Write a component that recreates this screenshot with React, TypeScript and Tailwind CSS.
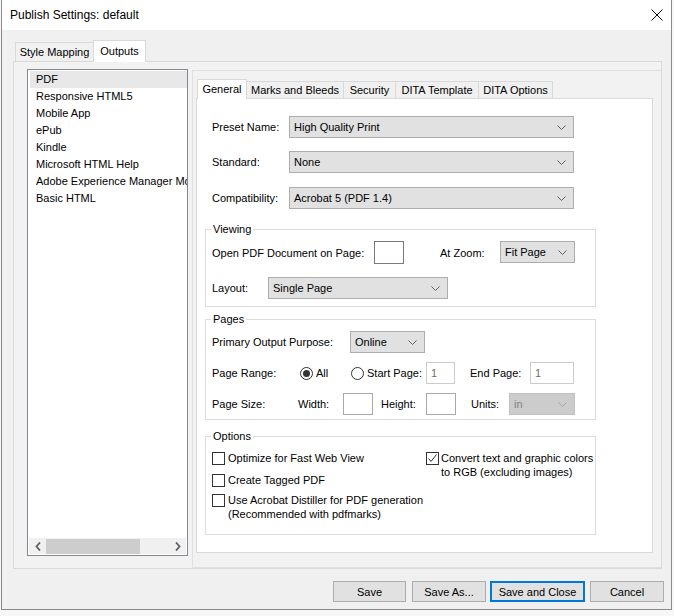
import React from 'react';

const Chevron = ({ color = '#606060' }: { color?: string }) => (
  <svg width="9" height="5" viewBox="0 0 9 5" fill="none">
    <path d="M0.5 0.5 L4.5 4.5 L8.5 0.5" stroke={color} strokeWidth="1" />
  </svg>
);

function Combo({ value, className, disabled }: { value: string; className: string; disabled?: boolean }) {
  return (
    <div
      className={`flex h-[22px] shrink-0 items-center justify-between border pl-[4px] pr-[7px] ${
        disabled ? 'border-[#bfbfbf] bg-[#cccccc] text-[#838383]' : 'border-[#adadad] bg-[#e1e1e1] text-black'
      } ${className}`}
    >
      <span>{value}</span>
      <Chevron color={disabled ? '#a8a8a8' : '#606060'} />
    </div>
  );
}

function TextBox({ value = '', className, tone = 'normal' }: { value?: string; className: string; tone?: 'normal' | 'light' | 'disabled' }) {
  const border =
    tone === 'normal' ? 'border-[#7a7a7a]' : tone === 'light' ? 'border-[#a9a9a9]' : 'border-[#cccccc]';
  return (
    <div className={`flex h-[22px] shrink-0 items-center border bg-white pl-[4px] text-[#6d6d6d] ${border} ${className}`}>
      {value}
    </div>
  );
}

function Group({ label, className, children }: { label: string; className: string; children: React.ReactNode }) {
  return (
    <div className={`relative ml-[8px] w-[391px] border border-[#dcdcdc] ${className}`}>
      <span className="absolute left-[5px] top-[-8px] bg-white px-[2px] leading-[14px]">{label}</span>
      {children}
    </div>
  );
}

function Radio({ checked }: { checked?: boolean }) {
  return (
    <span className="flex h-[13px] w-[13px] shrink-0 items-center justify-center rounded-full border border-[#333333] bg-white">
      {checked && <span className="h-[7px] w-[7px] rounded-full bg-[#333333]" />}
    </span>
  );
}

function Check({ checked }: { checked?: boolean }) {
  return (
    <span className="mt-[1px] flex h-[13px] w-[13px] shrink-0 items-center justify-center border border-[#333333] bg-white">
      {checked && (
        <svg width="11" height="11" viewBox="0 0 11 11" fill="none">
          <path d="M1.5 5.5 L4 8.5 L9.5 1.5" stroke="#333333" strokeWidth="1" />
        </svg>
      )}
    </span>
  );
}

const outputs = [
  'PDF',
  'Responsive HTML5',
  'Mobile App',
  'ePub',
  'Kindle',
  'Microsoft HTML Help',
  'Adobe Experience Manager Mobile',
  'Basic HTML',
];

const innerTabs = ['Marks and Bleeds', 'Security', 'DITA Template', 'DITA Options'];
const innerTabWidths = ['w-[97px]', 'w-[52px]', 'w-[83px]', 'w-[74px]'];

export default function App() {
  return (
    <div className="h-[616px] w-[674px] overflow-hidden bg-[#f7f7f7] pl-[1px] font-['Liberation_Sans',Arial,sans-serif] text-[11px] leading-[14px] text-black">
      <div className="flex h-[610px] w-[671px] flex-col border-x border-b border-[#8a8a8a] bg-[#f0f0f0]">
        {/* title bar */}
        <div className="flex h-[30px] shrink-0 items-center justify-between bg-white pl-[8px] pr-[8px]">
          <span className="text-[12px]">Publish Settings: default</span>
          <svg width="12" height="12" viewBox="0 0 12 12" fill="none">
            <path d="M0.5 0.5 L11.5 11.5 M11.5 0.5 L0.5 11.5" stroke="#111111" strokeWidth="1" />
          </svg>
        </div>

        <div className="flex flex-1 flex-col pt-[10px]">
          {/* outer tabs */}
          <div className="ml-[13px] flex h-[22px] items-start">
            <div className="mt-[2px] flex h-[20px] w-[78px] items-center justify-center border border-r-0 border-[#d9d9d9] bg-[#f0f0f0]">
              Style Mapping
            </div>
            <div className="relative z-10 flex h-[22px] w-[53px] items-start justify-center border border-b-0 border-[#d9d9d9] bg-white pt-[3px]">
              Outputs
            </div>
          </div>

          <div className="-mt-px ml-[11px] flex h-[508px] w-[649px] border border-[#d9d9d9] bg-[#f2f2f2] pl-[13px] pt-[7px]">
            {/* list of outputs */}
            <div className="flex h-[487px] w-[161px] shrink-0 flex-col border border-[#828790] bg-white">
              <div className="flex-1 overflow-hidden pt-[1px]">
                {outputs.map((item, i) => (
                  <div
                    key={item}
                    className={`ml-[2px] h-[17px] whitespace-nowrap pl-[6px] leading-[17px] ${i === 0 ? 'bg-[#e8e8e8]' : ''}`}
                  >
                    {item}
                  </div>
                ))}
              </div>
              <div className="mx-[1px] mb-[1px] flex h-[16px] items-center bg-[#f0f0f0]">
                <div className="flex w-[17px] justify-center">
                  <svg width="6" height="9" viewBox="0 0 6 9">
                    <path d="M5 0.5 L1.5 4.5 L5 8.5" stroke="#606060" strokeWidth="1.8" fill="none" />
                  </svg>
                </div>
                <div className="h-[15px] w-[94px] bg-[#cdcdcd]" />
                <div className="flex-1" />
                <div className="flex w-[17px] justify-center">
                  <svg width="6" height="9" viewBox="0 0 6 9">
                    <path d="M1 0.5 L4.5 4.5 L1 8.5" stroke="#606060" strokeWidth="1.8" fill="none" />
                  </svg>
                </div>
              </div>
            </div>

            {/* right pane */}
            <div className="ml-[4px] mt-[1px] flex h-[498px] w-[469px] flex-col border-y border-l border-[#e0e0e0] pt-[8px]">
              <div className="ml-[4px] flex h-[20px] items-start">
                <div className="relative z-10 flex h-[20px] w-[50px] items-start justify-center border border-b-0 border-[#d9d9d9] bg-white pt-[2px]">
                  General
                </div>
                {innerTabs.map((t, i) => (
                  <div
                    key={t}
                    className={`mt-[2px] flex h-[18px] items-center justify-center border border-l-0 border-[#d9d9d9] bg-[#f0f0f0] ${innerTabWidths[i]}`}
                  >
                    {t}
                  </div>
                ))}
              </div>

              <div className="-mt-px ml-[3px] flex h-[455px] w-[457px] flex-col border border-[#d9d9d9] bg-white pt-[17px]">
                {/* top combos */}
                <div className="flex items-center pl-[15px]">
                  <span className="w-[77px] shrink-0">Preset Name:</span>
                  <Combo value="High Quality Print" className="w-[285px]" />
                </div>
                <div className="mt-[13px] flex items-center pl-[15px]">
                  <span className="w-[77px] shrink-0">Standard:</span>
                  <Combo value="None" className="w-[285px]" />
                </div>
                <div className="mt-[14px] flex items-center pl-[15px]">
                  <span className="w-[77px] shrink-0">Compatibility:</span>
                  <Combo value="Acrobat 5 (PDF 1.4)" className="w-[285px]" />
                </div>

                {/* Viewing */}
                <Group label="Viewing" className="mt-[20px] h-[78px] pl-[6px] pt-[11px]">
                  <div className="flex h-[23px] items-center">
                    <span className="w-[162px] shrink-0">Open PDF Document on Page:</span>
                    <TextBox className="h-[23px] w-[30px]" />
                    <span className="ml-[36px] w-[60px] shrink-0">At Zoom:</span>
                    <div className="self-start">
                      <Combo value="Fit Page" className="h-[21px] w-[75px]" />
                    </div>
                  </div>
                  <div className="mt-[13px] flex items-center">
                    <span className="w-[56px] shrink-0">Layout:</span>
                    <Combo value="Single Page" className="w-[180px]" />
                  </div>
                </Group>

                {/* Pages */}
                <Group label="Pages" className="mt-[12px] h-[101px] pl-[6px] pt-[11px]">
                  <div className="flex items-center">
                    <span className="w-[138px] shrink-0">Primary Output Purpose:</span>
                    <Combo value="Online" className="w-[75px]" />
                  </div>
                  <div className="mt-[9px] flex items-center">
                    <span className="w-[88px] shrink-0">Page Range:</span>
                    <div className="flex w-[51px] shrink-0 items-center gap-[3px]">
                      <Radio checked />
                      <span>All</span>
                    </div>
                    <div className="flex w-[75px] shrink-0 items-center gap-[3px]">
                      <Radio />
                      <span>Start Page:</span>
                    </div>
                    <TextBox value="1" tone="disabled" className="w-[29px]" />
                    <span className="ml-[15px] w-[60px] shrink-0">End Page:</span>
                    <TextBox value="1" tone="disabled" className="w-[44px]" />
                  </div>
                  <div className="mt-[9px] flex items-center">
                    <span className="w-[86px] shrink-0">Page Size:</span>
                    <span className="w-[45px] shrink-0">Width:</span>
                    <TextBox tone="light" className="w-[30px]" />
                    <span className="ml-[8px] w-[45px] shrink-0">Height:</span>
                    <TextBox tone="light" className="w-[30px]" />
                    <span className="ml-[15px] w-[38px] shrink-0">Units:</span>
                    <Combo value="in" disabled className="w-[66px]" />
                  </div>
                </Group>

                {/* Options */}
                <Group label="Options" className="mt-[16px] flex h-[99px] pl-[6px] pt-[14px]">
                  <div className="flex w-[214px] shrink-0 flex-col">
                    <div className="flex items-start gap-[3px]">
                      <Check />
                      <span>Optimize for Fast Web View</span>
                    </div>
                    <div className="mt-[8px] flex items-start gap-[3px]">
                      <Check />
                      <span>Create Tagged PDF</span>
                    </div>
                    <div className="mt-[6px] flex items-start gap-[3px]">
                      <Check />
                      <span className="whitespace-nowrap">
                        Use Acrobat Distiller for PDF generation
                        <br />
                        (Recommended with pdfmarks)
                      </span>
                    </div>
                  </div>
                  <div className="flex items-start gap-[2px]">
                    <Check checked />
                    <span className="whitespace-nowrap">
                      Convert text and graphic colors
                      <br />
                      to RGB (excluding images)
                    </span>
                  </div>
                </Group>
              </div>
            </div>
          </div>

          {/* buttons */}
          <div className="mt-[12px] flex justify-end pr-[7px]">
            <button className="h-[21px] w-[73px] border border-[#adadad] bg-[#e1e1e1]">Save</button>
            <button className="ml-[6px] h-[21px] w-[74px] border border-[#adadad] bg-[#e1e1e1]">Save As...</button>
            <button className="ml-[4px] h-[21px] w-[95px] border-2 border-[#0078d7] bg-[#e1e1e1]">Save and Close</button>
            <button className="ml-[5px] h-[21px] w-[74px] border border-[#adadad] bg-[#e1e1e1]">Cancel</button>
          </div>
        </div>
      </div>
    </div>
  );
}
